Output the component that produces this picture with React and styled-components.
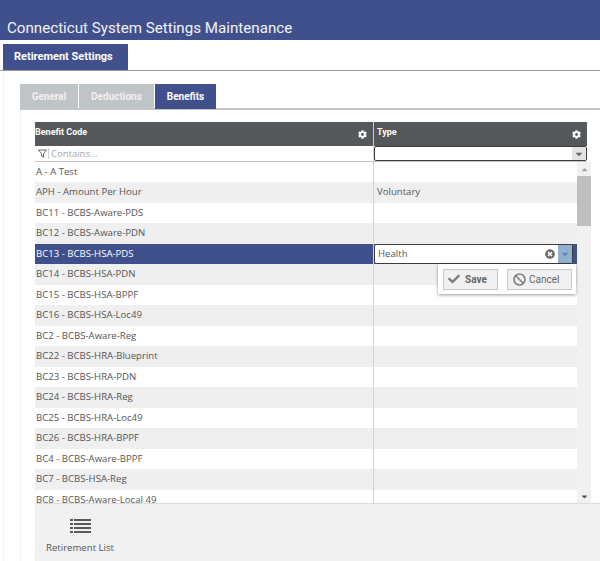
import React from "react";
import styled, { createGlobalStyle } from "styled-components";
import { FaCog, FaCheck, FaBan, FaTimesCircle, FaCaretDown, FaCaretUp } from "react-icons/fa";

const GlobalStyle = createGlobalStyle`
  html, body {
    margin: 0;
    background: #fff;
  }
  * {
    box-sizing: border-box;
  }
`;

const Page = styled.div`
  width: 600px;
  height: 561px;
  overflow: hidden;
  font-family: "Open Sans", sans-serif;
  color: #555;
`;

const Header = styled.div`
  height: 40px;
  background: #3f508c;
  color: #f2f3f7;
  font-family: Roboto, sans-serif;
  font-size: 15.15px;
  padding: 20px 0 0 7px;
  line-height: 17px;
`;

const TopTabs = styled.div`
  height: 31px;
  padding: 4px 0 0 3px;
  border-bottom: 1px solid #9a9a9a;
  display: flex;
`;

const TopTab = styled.div`
  width: 125px;
  height: 26px;
  background: #3f508c;
  color: #fff;
  font-family: Roboto, sans-serif;
  font-weight: 700;
  font-size: 11px;
  line-height: 26px;
  padding-left: 11px;
`;

const Panel = styled.div`
  margin-left: 3px;
  padding: 13px 0 0 16px;
  border-left: 1px solid #f1f1f1;
`;

const InnerTabs = styled.div`
  height: 26px;
  display: flex;
  gap: 1px;
  border-bottom: 2px solid #c3c7c9;
`;

const InnerTab = styled.div`
  height: 25px;
  width: ${(props) => props.$width}px;
  background: ${(props) => (props.$active ? "#3f508c" : "#bfc4c6")};
  color: ${(props) => (props.$active ? "#fff" : "#f0f1f1")};
  font-family: Roboto, sans-serif;
  font-weight: 700;
  font-size: 10px;
  line-height: 25px;
  text-align: center;
`;

const TabBody = styled.div`
  padding: 12px 0 0 14px;
  border-left: 1px solid #f1f1f1;
`;

const Grid = styled.div`
  position: relative;
  width: 565px;
`;

const HeadRow = styled.div`
  width: 552px;
  height: 24px;
  background: #54585a;
  color: #fff;
  display: grid;
  grid-template-columns: 339px 1fr;
  font-family: Roboto, sans-serif;
  font-weight: 700;
  font-size: 9px;
`;

const HeadCell = styled.div`
  position: relative;
  line-height: 21px;
  padding-left: ${(props) => props.$pad}px;
  border-right: ${(props) => (props.$first ? "1px solid #c9cbcc" : "none")};
`;

const Gear = styled(FaCog)`
  position: absolute;
  right: 6px;
  top: 8px;
  width: 9px;
  height: 9px;
  color: #fff;
`;

const FilterRow = styled.div`
  width: 552px;
  height: 16px;
  display: grid;
  grid-template-columns: 339px 1fr;
  border-bottom: 1px solid #c4c4c4;
`;

const ContainsCell = styled.div`
  display: flex;
  align-items: center;
  padding-left: 3px;
  font-size: 9.5px;
  color: #a9a9a9;
  border-right: 1px solid #d4d4d4;
`;

const FilterIcon = styled.div`
  display: flex;
  align-items: center;
  height: 11px;
  padding-right: 1px;
  margin-right: 2px;
  border-right: 1px solid #d0d0d0;
`;

const TypeSelect = styled.div`
  height: 15px;
  border: 1px solid #3c3c3c;
  border-radius: 2px;
  display: flex;
  justify-content: flex-end;
`;

const SelectArrow = styled.div`
  width: 14px;
  background: #e3e3e3;
  display: flex;
  align-items: center;
  justify-content: center;
  color: #666;
  font-size: 10px;
`;

const Body = styled.div`
  display: flex;
  height: 341px;
  overflow: hidden;
`;

const Rows = styled.div`
  width: 542px;
`;

const Row = styled.div`
  height: 20.47px;
  display: grid;
  grid-template-columns: 339px 1fr;
  font-size: 9.6px;
  line-height: 20.47px;
  background: ${(props) => (props.$selected ? "#3f508c" : props.$odd ? "#efefef" : "#fff")};
  color: ${(props) => (props.$selected ? "#fff" : "#555")};
`;

const CodeCell = styled.div`
  padding-left: 1px;
  white-space: nowrap;
  border-right: 1px solid #d4d4d4;
`;

const TypeCell = styled.div`
  padding-left: 3px;
`;

const EditCell = styled.div`
  height: 20px;
  margin-right: 4px;
  padding-left: 3px;
  background: #fff;
  color: #555;
  border: 1px solid #3c3c3c;
  border-radius: 2px;
  display: flex;
  align-items: center;
  justify-content: space-between;
`;

const EditActions = styled.div`
  display: flex;
  align-items: center;
  gap: 3px;
  height: 100%;
`;

const ClearIcon = styled(FaTimesCircle)`
  width: 10px;
  height: 10px;
  color: #6b6b6b;
`;

const EditArrow = styled.div`
  width: 14px;
  height: 100%;
  background: #8fb1cf;
  color: #5f86ab;
  display: flex;
  align-items: center;
  justify-content: center;
  font-size: 10px;
`;

const Popup = styled.div`
  position: absolute;
  left: 403px;
  top: 142px;
  width: 138px;
  height: 30px;
  background: #fff;
  box-shadow: 0 1px 3px rgba(0, 0, 0, 0.4);
  display: flex;
  align-items: center;
  gap: 9px;
  padding-left: 5px;
`;

const PopupButton = styled.div`
  height: 21px;
  width: ${(props) => props.$width}px;
  padding-left: ${(props) => props.$pad}px;
  background: #f1f1f1;
  border: 1px solid #c8c8c8;
  color: #666;
  display: flex;
  align-items: center;
  gap: ${(props) => props.$gap}px;
  font-family: Roboto, sans-serif;
  font-size: 10px;
  font-weight: ${(props) => (props.$bold ? 700 : 400)};

  svg {
    width: ${(props) => props.$icon}px;
    height: ${(props) => props.$icon}px;
    color: #808080;
  }
`;

const Scrollbar = styled.div`
  width: 14px;
  background: #f1f1f1;
  display: flex;
  flex-direction: column;
  align-items: center;
  color: #666;
  font-size: 9px;
`;

const ScrollArrow = styled.div`
  height: 14px;
  display: flex;
  align-items: center;
  justify-content: center;
  color: ${(props) => (props.$dark ? "#505050" : "#a3a3a3")};
`;

const Thumb = styled.div`
  width: 100%;
  height: 50px;
  background: #bfbfbf;
`;

const Spacer = styled.div`
  flex: 1;
`;

const Footer = styled.div`
  height: 70px;
  background: #f1f1f1;
  border-top: 1px solid #dcdcdc;
  padding: 15px 0 0 10px;
  width: 565px;
  display: flex;
  flex-direction: column;
  align-items: flex-start;
`;

const FooterButton = styled.div`
  width: 70px;
  display: flex;
  flex-direction: column;
  align-items: center;
  gap: 7px;
  font-size: 9.6px;
  color: #555;
`;

const ListIcon = () => (
  <svg width="21" height="15" viewBox="0 0 21 15">
    {[1, 5, 9, 13].map((y) => (
      <g key={y} fill="#5a5a5a">
        <rect x="0" y={y - 1} width="3" height="2" />
        <rect x="4" y={y - 1} width="17" height="2" />
      </g>
    ))}
  </svg>
);

const FunnelIcon = () => (
  <svg width="9" height="9" viewBox="0 0 9 9" fill="none" stroke="#666" strokeWidth="1">
    <path d="M0.5 1h8L5.5 4.6v3.6L3.5 7V4.6z" />
  </svg>
);

const rows = [
  ["A - A Test", ""],
  ["APH - Amount Per Hour", "Voluntary"],
  ["BC11 - BCBS-Aware-PDS", ""],
  ["BC12 - BCBS-Aware-PDN", ""],
  ["BC13 - BCBS-HSA-PDS", "edit"],
  ["BC14 - BCBS-HSA-PDN", ""],
  ["BC15 - BCBS-HSA-BPPF", ""],
  ["BC16 - BCBS-HSA-Loc49", ""],
  ["BC2 - BCBS-Aware-Reg", ""],
  ["BC22 - BCBS-HRA-Blueprint", ""],
  ["BC23 - BCBS-HRA-PDN", ""],
  ["BC24 - BCBS-HRA-Reg", ""],
  ["BC25 - BCBS-HRA-Loc49", ""],
  ["BC26 - BCBS-HRA-BPPF", ""],
  ["BC4 - BCBS-Aware-BPPF", ""],
  ["BC7 - BCBS-HSA-Reg", ""],
  ["BC8 - BCBS-Aware-Local 49", ""],
];

const App = () => {
  return (
    <Page>
      <GlobalStyle />
      <Header>Connecticut System Settings Maintenance</Header>
      <TopTabs>
        <TopTab>Retirement Settings</TopTab>
      </TopTabs>
      <Panel>
        <InnerTabs>
          <InnerTab $width={58}>General</InnerTab>
          <InnerTab $width={75}>Deductions</InnerTab>
          <InnerTab $width={61} $active>Benefits</InnerTab>
        </InnerTabs>
        <TabBody>
          <Grid>
            <HeadRow>
              <HeadCell $first $pad={0}>
                Benefit Code
                <Gear />
              </HeadCell>
              <HeadCell $pad={3}>
                Type
                <Gear />
              </HeadCell>
            </HeadRow>
            <FilterRow>
              <ContainsCell>
                <FilterIcon><FunnelIcon /></FilterIcon>
                Contains...
              </ContainsCell>
              <TypeSelect>
                <Spacer />
                <SelectArrow><FaCaretDown /></SelectArrow>
              </TypeSelect>
            </FilterRow>
            <Body>
              <Rows>
                {rows.map(([code, type], i) => (
                  <Row key={code} $odd={i % 2 === 1} $selected={type === "edit"}>
                    <CodeCell>{code}</CodeCell>
                    {type === "edit" ? (
                      <EditCell>
                        Health
                        <EditActions>
                          <ClearIcon />
                          <EditArrow><FaCaretDown /></EditArrow>
                        </EditActions>
                      </EditCell>
                    ) : (
                      <TypeCell>{type}</TypeCell>
                    )}
                  </Row>
                ))}
              </Rows>
              <Scrollbar>
                <ScrollArrow><FaCaretUp /></ScrollArrow>
                <Thumb />
                <Spacer />
                <ScrollArrow $dark><FaCaretDown /></ScrollArrow>
              </Scrollbar>
            </Body>
            <Popup>
              <PopupButton $width={55} $bold $icon={12} $pad={4} $gap={5}>
                <FaCheck />
                Save
              </PopupButton>
              <PopupButton $width={65} $icon={13} $pad={5} $gap={3}>
                <FaBan />
                Cancel
              </PopupButton>
            </Popup>
            <Footer>
              <FooterButton>
                <ListIcon />
                Retirement List
              </FooterButton>
            </Footer>
          </Grid>
        </TabBody>
      </Panel>
    </Page>
  );
};

export default App;
